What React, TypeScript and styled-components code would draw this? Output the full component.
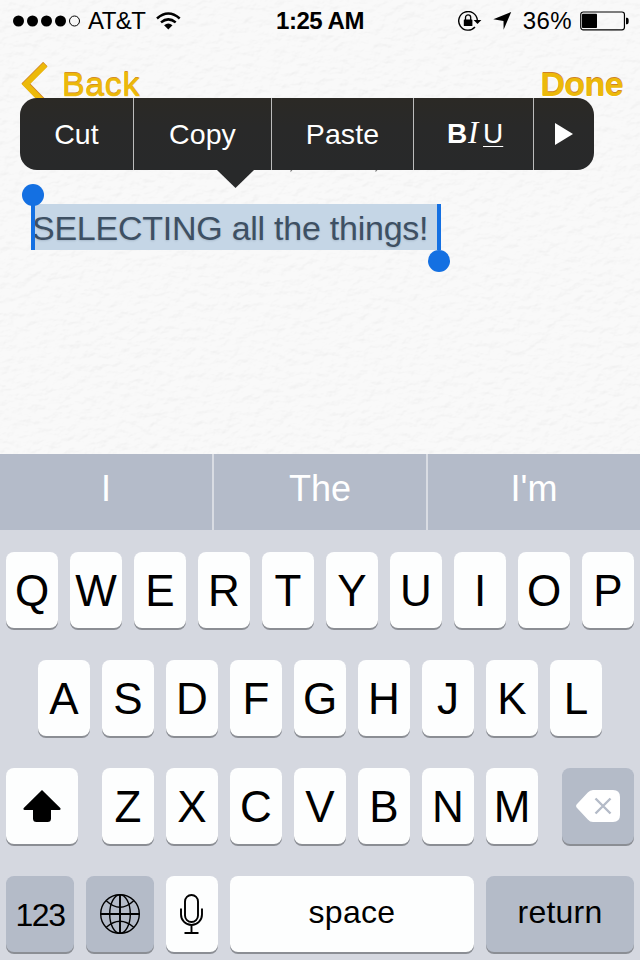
import React from 'react';
import styled, { createGlobalStyle } from 'styled-components';

const GlobalStyle = createGlobalStyle`
  * { box-sizing: border-box; }
  body { margin: 0; background: #d5d8e0; }
`;

const Screen = styled.main`
  width: 640px;
  height: 960px;
  overflow: hidden;
  display: flex;
  flex-direction: column;
  font-family: 'Liberation Sans', Arial, sans-serif;
  color: #000;
`;

const Paper = styled.section`
  position: relative;
  isolation: isolate;
  height: 454px;
  background: #f7f7f7;
`;

const Grain = styled.svg`
  position: absolute;
  inset: 0;
  z-index: -1;
`;

const StatusBar = styled.header`
  height: 40px;
  padding: 1px 11px 0 13px;
  display: grid;
  grid-template-columns: 1fr auto 1fr;
  align-items: center;
  font-size: 24px;
  line-height: 28px;
`;

const StatusSide = styled.div<{ $end?: boolean }>`
  display: flex;
  align-items: center;
  justify-content: ${(p) => (p.$end ? 'flex-end' : 'flex-start')};
`;

const Carrier = styled.span`
  margin: 0 11px 0 7px;
  letter-spacing: -0.55px;
`;

const Clock = styled.time`
  margin-right: 2px;
  font-weight: 700;
  letter-spacing: -0.45px;
`;

const Percent = styled.span`
  margin: 0 8px 0 11px;
  letter-spacing: 0.4px;
`;

const NavBar = styled.nav`
  height: 88px;
  padding: 0 17px 0 21px;
  display: flex;
  align-items: center;
  justify-content: space-between;
`;

const NavButton = styled.button<{ $strong?: boolean }>`
  border: 0;
  padding: 0;
  background: none;
  display: flex;
  align-items: center;
  gap: 13px;
  font: ${(p) => (p.$strong ? 700 : 400)} 34px/40px 'Liberation Sans', Arial, sans-serif;
  letter-spacing: ${(p) => (p.$strong ? '-0.6px' : '0.6px')};
  color: #ecb90a;
  -webkit-text-stroke: ${(p) => (p.$strong ? '0' : '0.6px #ecb90a')};
  text-shadow: 0 -1px 0 #cf8126, 0 1px 1px #fff;
`;

const DateLine = styled.div`
  height: 76px;
  padding: 42px 0 0 289px;
  svg { display: block; }
`;

const NoteLine = styled.p`
  position: relative;
  width: 410px;
  height: 46px;
  margin: 0 0 0 31px;
  padding: 0 0 0 1px;
  background: #c5d6e6;
  color: #3e5063;
  font-size: 34px;
  line-height: 48px;
  letter-spacing: -0.25px;
  white-space: nowrap;
  text-shadow: 0 1px 2px rgba(60, 80, 100, 0.2);
`;

const Handle = styled.span<{ $end?: boolean }>`
  position: absolute;
  top: 0;
  ${(p) => (p.$end ? 'right: 0;' : 'left: 0;')}
  width: 4px;
  height: 46px;
  background: #1470e2;
  &::after {
    content: '';
    position: absolute;
    left: -9px;
    ${(p) => (p.$end ? 'top: 46px;' : 'top: -20px;')}
    width: 22px;
    height: 22px;
    border-radius: 50%;
    background: #1470e2;
  }
`;

const EditMenu = styled.div`
  position: absolute;
  left: 20px;
  top: 98px;
  width: 574px;
  height: 72px;
  display: flex;
  border-radius: 17px;
  background: linear-gradient(#2b2925, #292929 40%, #28292a);
`;

const MenuItem = styled.div<{ $w: number }>`
  width: ${(p) => p.$w}px;
  display: flex;
  align-items: center;
  justify-content: center;
  padding-bottom: 1px;
  color: #fff;
  font-size: 28.5px;
  line-height: 70px;
  letter-spacing: 0.1px;
  & + & { border-left: 1px solid #bcbcbc; }
`;

const StyleLetters = styled.span`
  display: flex;
  align-items: baseline;
  margin-left: 3px;
  letter-spacing: 0;
  line-height: 30px;
  b { width: 21px; font-size: 28px; }
  i { width: 15px; font: italic 31px/30px 'Liberation Serif', serif; }
  span {
    width: 20px;
    font-size: 28px;
    text-decoration: underline;
    text-decoration-thickness: 1px;
    text-underline-offset: 3px;
  }
`;

const MenuPointer = styled.svg`
  position: absolute;
  left: 197px;
  top: 72px;
`;

const Suggestions = styled.div`
  height: 76px;
  display: grid;
  grid-template-columns: 212px 212px 212px;
  gap: 2px;
  background: #d9dce3;
`;

const Suggestion = styled.div`
  background: #b4bbc9;
  color: #fff;
  text-align: center;
  font-size: 36px;
  line-height: 69px;
`;

const Keyboard = styled.section`
  height: 430px;
  padding: 22px 6px 0;
  display: flex;
  flex-direction: column;
  gap: 32px;
  background: #d5d8e0;
`;

const KeyRow = styled.div<{ $spread?: boolean }>`
  display: flex;
  gap: 12px;
  justify-content: ${(p) => (p.$spread ? 'space-between' : 'center')};
`;

const Key = styled.div<{ $w?: number; $dark?: boolean; $size?: number; $shift?: number; $track?: number }>`
  width: ${(p) => p.$w ?? 52}px;
  height: 76px;
  padding-top: ${(p) => Math.max(p.$shift ?? 0, 0)}px;
  padding-bottom: ${(p) => Math.max(-(p.$shift ?? 0), 0)}px;
  display: flex;
  align-items: center;
  justify-content: center;
  border-radius: 8px;
  background: ${(p) => (p.$dark ? '#b4bbc8' : '#fdfefe')};
  box-shadow: 0 2px 0 #8b8e94;
  font-size: ${(p) => p.$size ?? 44}px;
  line-height: 50px;
  letter-spacing: ${(p) => p.$track ?? 0}px;
`;

const PaperGrain = () => (
  <Grain width="640" height="454">
    <filter id="grain" x="0" y="0" width="100%" height="100%">
      <feTurbulence type="fractalNoise" baseFrequency="0.09 0.13" numOctaves="4" seed="8" result="n" />
      <feDiffuseLighting in="n" surfaceScale="0.9" diffuseConstant="1.13" lightingColor="#ffffff">
        <feDistantLight azimuth="240" elevation="60" />
      </feDiffuseLighting>
    </filter>
    <rect width="640" height="454" filter="url(#grain)" opacity="0.34" />
  </Grain>
);

const SignalDots = () => (
  <svg width="68" height="12" viewBox="0 0 68 12">
    {[5.5, 19.5, 33.5, 47.5].map((x) => (
      <circle key={x} cx={x} cy="6" r="5.5" />
    ))}
    <circle cx="61.5" cy="6" r="5" fill="none" stroke="#000" />
  </svg>
);

const Wifi = () => (
  <svg width="25" height="18" viewBox="0 0 25 18">
    <g fill="none" stroke="#000" strokeWidth="2.5">
      <path d="M1 6.5Q12.3-3.5 23.7 6.5" />
      <path d="M5 10.4Q12.3 4.3 19.7 10.4" />
    </g>
    <path d="M8.1 13.2Q12.3 9.8 16.5 13.2L12.3 17.5Z" />
  </svg>
);

const RotationLock = () => (
  <svg width="24" height="20" viewBox="0 0 24 20">
    <path d="M17 16A9.3 9.3 0 1 1 19.3 9" fill="none" stroke="#000" strokeWidth="1.4" />
    <path d="M15.6 9H23.4L19.5 13Z" />
    <rect x="5.8" y="8.5" width="8.6" height="6.6" rx="0.6" />
    <path d="M7.5 9V6.5a2.6 2.6 0 0 1 5.2 0V9" fill="none" stroke="#000" strokeWidth="1.3" />
  </svg>
);

const LocationArrow = () => (
  <svg width="19" height="18" viewBox="0 0 19 18">
    <path d="M18.2 0L10.6 17.8L10.5 8.9L0.3 7.2Z" />
  </svg>
);

const Battery = () => (
  <svg width="49" height="20" viewBox="0 0 49 20">
    <rect x="0.75" y="1" width="43.7" height="17.8" rx="2.5" fill="none" stroke="#000" strokeWidth="1.2" />
    <rect x="2" y="2.7" width="15" height="14.3" rx="0.8" />
    <path d="M46 6.7h1q1.7 0 1.7 3.2t-1.7 3.3h-1z" />
  </svg>
);

const IconGap = styled.span`
  width: 11px;
`;

const BackChevron = () => (
  <svg width="28" height="44" viewBox="0 0 28 44">
    <path d="M24.3 2L4.8 21.5L24.3 41.5" fill="none" stroke="#cf8126" strokeWidth="6.2" />
    <path d="M24.3 2.8L4.8 22.2L24.3 42.2" fill="none" stroke="#ecb90a" strokeWidth="5.8" />
  </svg>
);

const ShiftIcon = () => (
  <svg width="38" height="32" viewBox="0 0 38 32">
    <path d="M19 0L37.5 18.3Q38 20 36.5 20H28V28.5Q28 32 24.5 32H13.5Q10 32 10 28.5V20H1.5Q0 20 .5 18.3Z" />
  </svg>
);

const DeleteIcon = () => (
  <svg width="44" height="32" viewBox="0 0 44 32">
    <path d="M.6 14.6L11.8 2.6Q14 0 17 0H37Q44 0 44 7V25Q44 32 37 32H17Q14 32 11.8 29.4L.6 17.4Q-.4 16 .6 14.6Z" fill="#fff" />
    <path d="M19.5 8.5L34.5 23.5M34.5 8.5L19.5 23.5" stroke="#b4bbc8" strokeWidth="2.4" />
  </svg>
);

const GlobeIcon = () => (
  <svg width="40" height="40" viewBox="0 0 40 40" fill="none" stroke="#000" strokeWidth="1.4">
    <circle cx="20" cy="20" r="19.3" />
    <ellipse cx="20" cy="20" rx="10.3" ry="19.3" />
    <path d="M20 .5V39.5M.5 20H39.5" strokeWidth="1.9" />
    <path d="M6.3 6.8Q20 19.8 33.7 6.8M6.3 33.2Q20 21.5 33.7 33.2" />
  </svg>
);

const MicIcon = () => (
  <svg width="24" height="40" viewBox="0 0 24 40" fill="none" stroke="#000" strokeWidth="1.9">
    <rect x="5" y="1" width="13" height="27" rx="6.5" />
    <path d="M1 14.5V20.5A10.4 10.4 0 0 0 22 20.5V14.5M11.5 31V39M4.5 39H18.5" />
  </svg>
);

const App = () => (
  <>
    <GlobalStyle />
    <Screen>
      <Paper>
        <PaperGrain />
        <StatusBar>
          <StatusSide>
            <SignalDots />
            <Carrier>AT&amp;T</Carrier>
            <Wifi />
          </StatusSide>
          <Clock>1:25 AM</Clock>
          <StatusSide $end>
            <RotationLock />
            <IconGap />
            <LocationArrow />
            <Percent>36%</Percent>
            <Battery />
          </StatusSide>
        </StatusBar>
        <NavBar>
          <NavButton>
            <BackChevron />
            Back
          </NavButton>
          <NavButton $strong>Done</NavButton>
        </NavBar>
        <DateLine>
          <svg width="90" height="4" viewBox="0 0 90 4" fill="none" stroke="#777" strokeWidth="1.2">
            <path d="M3.5 -1L1.5 1.5M88.5 -1L86.5 1.5" />
          </svg>
        </DateLine>
        <NoteLine>
          SELECTING all the things!
          <Handle />
          <Handle $end />
        </NoteLine>
        <EditMenu>
          <MenuItem $w={113}>Cut</MenuItem>
          <MenuItem $w={138}>Copy</MenuItem>
          <MenuItem $w={142}>Paste</MenuItem>
          <MenuItem $w={120}>
            <StyleLetters>
              <b>B</b>
              <i>I</i>
              <span>U</span>
            </StyleLetters>
          </MenuItem>
          <MenuItem $w={61}>
            <svg width="18" height="22" viewBox="0 0 18 22">
              <path d="M0 0L18 11L0 22Z" fill="#fff" />
            </svg>
          </MenuItem>
          <MenuPointer width="37" height="18" viewBox="0 0 37 18">
            <path d="M0 0H37L18.5 18Z" fill="#28292a" />
          </MenuPointer>
        </EditMenu>
      </Paper>
      <Suggestions>
        {['I', 'The', "I'm"].map((word) => (
          <Suggestion key={word}>{word}</Suggestion>
        ))}
      </Suggestions>
      <Keyboard>
        {['QWERTYUIOP', 'ASDFGHJKL'].map((row) => (
          <KeyRow key={row}>
            {[...row].map((letter) => (
              <Key key={letter} $shift={2}>{letter}</Key>
            ))}
          </KeyRow>
        ))}
        <KeyRow $spread>
          <Key $w={72}>
            <ShiftIcon />
          </Key>
          <KeyRow>
            {[...'ZXCVBNM'].map((letter) => (
              <Key key={letter} $shift={2}>{letter}</Key>
            ))}
          </KeyRow>
          <Key $w={72} $dark>
            <DeleteIcon />
          </Key>
        </KeyRow>
        <KeyRow>
          <Key $w={68} $dark $size={32} $shift={2} $track={-1.5}>123</Key>
          <Key $w={68} $dark>
            <GlobeIcon />
          </Key>
          <Key>
            <MicIcon />
          </Key>
          <Key $w={244} $size={32} $shift={-5} $track={0.3}>space</Key>
          <Key $w={148} $dark $size={32} $shift={-5} $track={0.2}>return</Key>
        </KeyRow>
      </Keyboard>
    </Screen>
  </>
);

export default App;
